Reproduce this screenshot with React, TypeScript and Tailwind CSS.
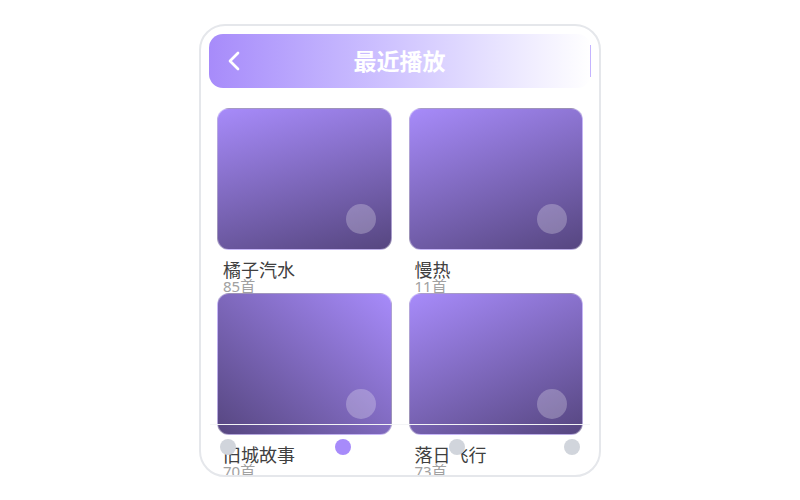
import React from 'react'
import { ChevronLeft } from 'lucide-react'

const ALBUMS = [
  { title: '橘子汽水', count: 85, bg: 'bg-[linear-gradient(165deg,#a78bfa,#564680)]' },
  { title: '慢热', count: 11, bg: 'bg-[linear-gradient(160deg,#a78bfa,#564680)]' },
  { title: '旧城故事', count: 70, bg: 'bg-[linear-gradient(220deg,#a78bfa,#564680)]' },
  { title: '落日飞行', count: 73, bg: 'bg-[linear-gradient(155deg,#a78bfa,#564680)]' },
]

const TABS = [false, true, false, false]

export default function App() {
  return (
    <div className="w-full h-[500px] bg-white pt-[24px] font-['Noto_Sans','Noto_Sans_CJK_SC',sans-serif]">
      <div className="relative mx-auto w-[402px] h-[453px] rounded-[26px] border-2 border-gray-200 bg-white overflow-hidden">
        {/* Header */}
        <div className="p-2">
          <div className="h-[54px] rounded-[14px] bg-gradient-to-r from-[#a78bfa] to-white flex items-center">
            <ChevronLeft size={32} className="ml-[9px] text-white" />
            <div className="flex-1 text-center text-[23px] font-bold text-white">最近播放</div>
            <div className="w-[32px] mr-[9px]" />
            <div className="w-px h-[32px] bg-violet-300" />
          </div>
        </div>

        {/* Grid */}
        <div className="px-4 pt-3 grid grid-cols-2 gap-x-[17px]">
          {ALBUMS.map(a => (
            <div key={a.title} className="h-[185px] flex flex-col">
              <div className={`relative h-[142px] rounded-xl border border-white/40 ${a.bg}`}>
                <div className="absolute right-[15px] bottom-[15px] w-[30px] h-[30px] rounded-full bg-white/25" />
              </div>
              <div className="pl-[6px] mt-[11px] text-[18px] leading-[18px] text-neutral-700">{a.title}</div>
              <div className="pl-[6px] text-[15px] leading-[14px] text-neutral-400">{a.count}首</div>
            </div>
          ))}
        </div>

        {/* Tab bar */}
        <div className="absolute left-[9px] right-[9px] bottom-0 h-[51px] border-t border-gray-100 flex justify-between px-[10px] pt-[14px]">
          {TABS.map((on, i) => (
            <div key={i} className={`w-4 h-4 rounded-full ${on ? 'bg-[#a78bfa]' : 'bg-gray-300'}`} />
          ))}
        </div>
      </div>
    </div>
  )
}
